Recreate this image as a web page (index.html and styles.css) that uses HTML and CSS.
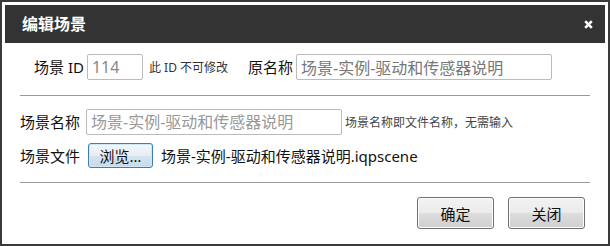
FILE: index.html
```html
<!DOCTYPE html>
<html lang="zh-CN">
<head>
  <meta charset="UTF-8" />
  <title>编辑场景</title>
  <link rel="stylesheet" href="styles.css">
</head>
<body>
  <div class="dialog">
    <!-- Cabecera -->
    <div class="dialog-head">
      <span class="dialog-title">编辑场景</span>
      <span class="dialog-close">
        <svg width="9" height="9" viewBox="0 0 9 9" xmlns="http://www.w3.org/2000/svg">
          <path d="M1.2 1.2 L7.8 7.8 M7.8 1.2 L1.2 7.8" stroke="#fff" stroke-width="2.6" />
        </svg>
      </span>
    </div>

    <div class="dialog-body">
      <div class="row row-top">
        <label class="label">场景 ID</label>
        <input class="field field-id" value="114" readonly>
        <span class="note">此 ID 不可修改</span>
        <label class="label label-orig">原名称</label>
        <input class="field field-orig" value="场景-实例-驱动和传感器说明" readonly>
      </div>

      <div class="divider"></div>

      <div class="row">
        <label class="label">场景名称</label>
        <input class="field field-name" placeholder="场景-实例-驱动和传感器说明">
        <span class="hint">场景名称即文件名称，无需输入</span>
      </div>

      <div class="row row-file">
        <label class="label">场景文件</label>
        <button class="browse">浏览…</button>
        <span class="file-name">场景-实例-驱动和传感器说明.iqpscene</span>
      </div>

      <div class="divider divider-bottom"></div>

      <div class="actions">
        <button class="btn">确定</button>
        <button class="btn">关闭</button>
      </div>
    </div>
  </div>
</body>
</html>
```

FILE: styles.css
```css
body {
  margin: 0;
  font-family: "Noto Sans", "Noto Sans CJK SC", sans-serif;
  color: #111;
}

.dialog {
  box-sizing: border-box;
  width: 610px;
  height: 246px;
  border: 2px solid #3a3a3a;
  padding: 3px;
  background: #fff;
  display: flex;
  flex-direction: column;
}

.dialog-head {
  flex-shrink: 0;
  height: 38px;
  background: #333;
  color: #fff;
  display: flex;
  align-items: center;
  justify-content: space-between;
  padding: 0 12px 0 17px;
}

.dialog-title {
  font-size: 16px;
  font-weight: bold;
  line-height: 20px;
}

.dialog-close {
  display: flex;
}

.dialog-body {
  padding: 11px 15px 0;
}

.row {
  display: flex;
  align-items: center;
  height: 26px;
}

.row-top {
  padding-left: 14px;
}

.label {
  font-size: 15px;
  line-height: 20px;
  color: #111;
}

.field {
  box-sizing: border-box;
  height: 26px;
  border: 1px solid #bbb;
  border-radius: 2px;
  padding: 0 4px;
  font-family: inherit;
  font-size: 16px;
  color: #888;
  background: #fff;
  outline: none;
}

.field::placeholder {
  color: #999;
}

.field-id {
  width: 56px;
  margin-left: 3px;
}

.note {
  font-size: 12px;
  color: #333;
  margin-left: 6px;
}

.label-orig {
  margin-left: 20px;
}

.field-orig {
  width: 256px;
  margin-left: 3px;
  color: #777;
}

.field-name {
  width: 256px;
  margin-left: 6px;
}

.hint {
  font-size: 12px;
  color: #444;
  margin-left: 3px;
}

.divider {
  border-top: 1px solid #999;
  margin: 15px 0 13px;
}

.row-file {
  margin-top: 8px;
  height: 25px;
}

.browse {
  box-sizing: border-box;
  width: 65px;
  height: 25px;
  margin-left: 8px;
  border: 1px solid #3c7fb1;
  border-radius: 3px;
  background: linear-gradient(#f2f8fc, #e6eef5 50%, #d4e3ef 51%, #c8dbea);
  box-shadow: inset 0 0 0 1px #cfe6f7;
  font-family: inherit;
  font-size: 15px;
  color: #111;
  padding: 0;
}

.file-name {
  margin-left: 8px;
  font-size: 15px;
  color: #111;
}

.divider-bottom {
  margin: 14px 0 14px;
}

.actions {
  display: flex;
  justify-content: flex-end;
  gap: 14px;
  padding-right: 5px;
}

.btn {
  box-sizing: border-box;
  width: 77px;
  height: 32px;
  border: 1px solid #707070;
  border-radius: 3px;
  background: linear-gradient(#f2f2f2, #ebebeb 50%, #dddddd 51%, #cfcfcf);
  box-shadow: inset 0 0 0 1px #fcfcfc;
  font-family: inherit;
  font-size: 15px;
  color: #111;
  padding: 0;
}
```
